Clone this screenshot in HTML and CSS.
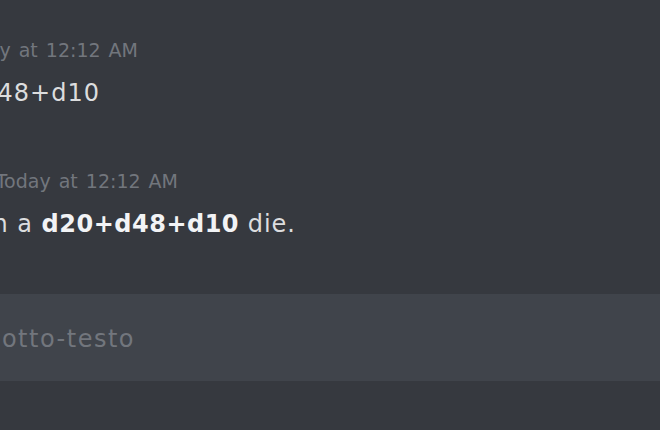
FILE: index.html
```html
<!DOCTYPE html>
<html lang="en">
<head>
    <meta charset="UTF-8">
    <meta name="viewport" content="width=device-width, initial-scale=1.0">
    <title>sotto-testo</title>
    <link rel="stylesheet" href="styles.css">
</head>
<body>
    <div class="chat">
        <div class="message">
            <div class="line meta first"><span>Today at 12:12 AM</span></div>
            <div class="line text first"><span>!roll d20+d48+d10</span></div>
        </div>
        <div class="message">
            <div class="line meta second"><span>Today at 12:12 AM</span></div>
            <div class="line text second"><span>I've thrown a <b>d20+d48+d10</b> die.</span></div>
        </div>
    </div>
    <div class="composer">
        <div class="line placeholder"><span>Invia un messaggio a #sotto-testo</span></div>
    </div>
</body>
</html>
```
FILE: styles.css
```css
body{
    margin: 0;
    padding: 0;
    background-color: #36393f;
    font-family: "DejaVu Sans", "Open Sans", sans-serif;
    overflow: hidden;
}
.chat{
    padding-top: 37px;
}
.message{
    margin-bottom: 58px;
}
.message:last-child{
    margin-bottom: 0;
}
/* lines are cut on the left side, so they are right-anchored */
.line{
    display: flex;
    justify-content: flex-end;
    white-space: nowrap;
}
.meta{
    font-size: 19px;
    line-height: 26px;
    word-spacing: 2px;
    color: #72767d;
}
.text{
    font-size: 24px;
    line-height: 34px;
    letter-spacing: 1px;
    color: #dcddde;
    margin-top: 13px;
}
.text b{
    font-weight: 700;
    letter-spacing: 0.5px;
    color: #f2f3f5;
}
.meta.first{width: 138px;}
.text.first{width: 100px;}
.meta.second{width: 178px;}
.text.second{width: 296px;}

.composer{
    margin-top: 53px;
    height: 87px;
    box-sizing: border-box;
    padding-top: 28px;
    background-color: #40444b;
}
.placeholder{
    width: 135px;
    font-size: 24px;
    line-height: 34px;
    letter-spacing: 1.5px;
    color: #72767d;
}
```
